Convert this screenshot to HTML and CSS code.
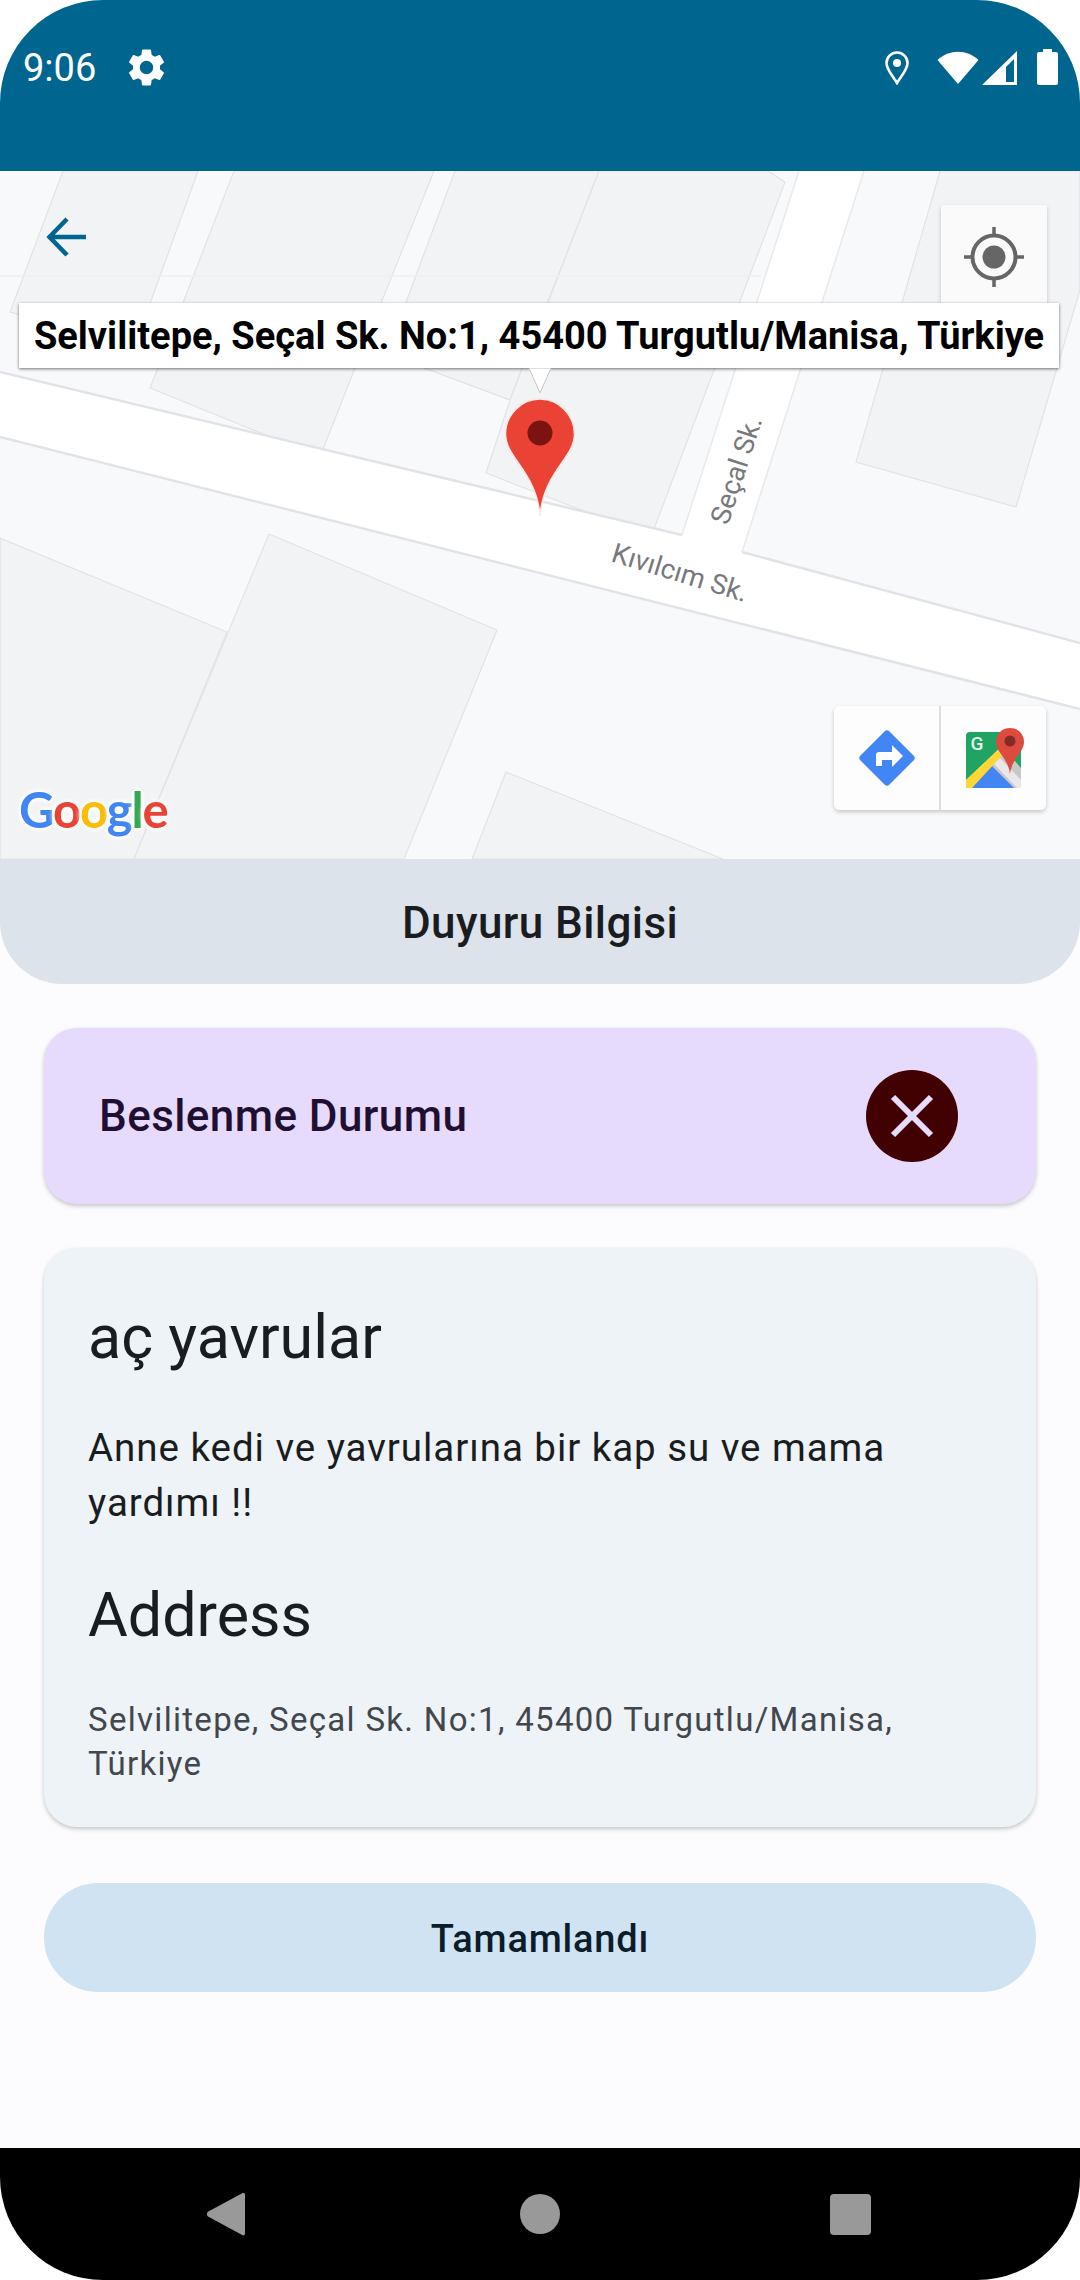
FILE: index.html
```html
<!DOCTYPE html>
<html lang="tr">
<head>
    <meta charset="UTF-8">
    <meta name="viewport" content="width=device-width, initial-scale=1.0">
    <title>Duyuru Bilgisi</title>
    <link rel="stylesheet" href="styles.css">
</head>
<body>

    <div class="phone">

        <!-- status bar -->
        <div class="status-bar">
            <div class="status-left">
                <span class="clock">9:06</span>
                <svg class="gear" width="45" height="45" viewBox="0 0 24 24"><path fill="#fff" d="M19.14 12.94c.04-.3.06-.61.06-.94s-.02-.64-.07-.94l2.03-1.58a.49.49 0 0 0 .12-.61l-1.92-3.32a.49.49 0 0 0-.59-.22l-2.39.96a7 7 0 0 0-1.62-.94l-.36-2.54a.48.48 0 0 0-.48-.41h-3.84a.48.48 0 0 0-.47.41l-.36 2.54c-.59.24-1.13.57-1.62.94l-2.39-.96a.49.49 0 0 0-.59.22L2.74 8.87a.48.48 0 0 0 .12.61l2.03 1.58c-.05.3-.09.63-.09.94s.02.64.07.94l-2.03 1.58a.49.49 0 0 0-.12.61l1.92 3.32c.12.22.37.29.59.22l2.39-.96c.5.38 1.03.7 1.62.94l.36 2.54c.05.24.24.41.48.41h3.84c.24 0 .44-.17.47-.41l.36-2.54c.59-.24 1.13-.56 1.62-.94l2.39.96c.22.08.47 0 .59-.22l1.92-3.32a.48.48 0 0 0-.12-.61l-2.01-1.58zM12 15.6A3.6 3.6 0 1 1 12 8.4a3.6 3.6 0 0 1 0 7.2z"/></svg>
            </div>
            <div class="status-right">
                <svg class="st-pin" width="24" height="34" viewBox="0 0 24 34"><path fill="none" stroke="#fff" stroke-width="2.6" d="M12 32 C8 25 1.5 19 1.5 12 A10.5 10.5 0 0 1 22.5 12 C22.5 19 16 25 12 32Z"/><circle cx="12" cy="12" r="4" fill="#fff"/></svg>
                <svg class="st-wifi" width="42" height="34" viewBox="0 0 42 34"><path fill="#fff" d="M0.5 9 C12 -2 30 -2 41.5 9 L21 33Z"/></svg>
                <svg class="st-signal" width="35" height="34" viewBox="0 0 35 34"><path fill="#fff" fill-rule="evenodd" d="M35 0V34H0ZM32 8 L24 16V31H32Z"/></svg>
                <svg class="st-battery" width="21" height="36" viewBox="0 0 21 36"><path fill="#fff" d="M6 0h9v3h4a2 2 0 0 1 2 2v29a2 2 0 0 1-2 2H2a2 2 0 0 1-2-2V5a2 2 0 0 1 2-2h4z"/></svg>
            </div>
        </div>

        <!-- map -->
        <div class="map">
            <svg class="map-canvas" width="1080" height="688" viewBox="0 171 1080 688">
                <rect x="0" y="171" width="1080" height="688" fill="#f8f9fb"/>
                <g fill="#f1f3f5" stroke="#e2e3e6" stroke-width="1.2">
                    <polygon points="63,171 198,171 135,345 10,312"/>
                    <polygon points="234,171 434,171 355,368 320,457 150,388"/>
                    <polygon points="455,171 599,171 525,360 510,400 424,368 406,302"/>
                    <polygon points="599,171 768,171 785,182 651,537 486,473 510,400"/>
                    <polygon points="940,171 1080,171 1080,290 1057,368 1016,507 856,462"/>
                    <polygon points="0,538 227,632 134,859 0,859"/>
                    <polygon points="269,534 497,630 404,859 134,859"/>
                    <polygon points="506,772 723,859 472,859"/>
                </g>
                <line x1="0" y1="276" x2="761" y2="276" stroke="#f1efea" stroke-width="1.5"/>
                <polygon points="0,372 682,535 799,171 864,171 742,552 1080,643 1080,709 0,437" fill="#fff"/>
                <g fill="none" stroke="#e2e3e7" stroke-width="2.5">
                    <polyline points="0,372 682,535"/>
                    <polyline points="0,437 1080,709"/>
                    <polyline points="742,552 1080,643"/>
                </g>
                <g fill="none" stroke="#e8e9ec" stroke-width="1.5">
                    <polyline points="682,535 799,171"/>
                    <polyline points="742,552 864,171"/>
                </g>
                <text class="street" transform="translate(728 526) rotate(-72)">Seçal Sk.</text>
                <text class="street" transform="translate(610 561) rotate(17)">Kıvılcım Sk.</text>
            </svg>

            <button class="back-btn" aria-label="Geri">
                <svg width="44" height="44" viewBox="0 0 44 44"><path fill="none" stroke="#006690" stroke-width="4.500" d="M41 22H6M22 4 4.500 22 22 40"/></svg>
            </button>

            <div class="locate-btn">
                <svg width="66" height="66" viewBox="0 0 66 66"><circle cx="33" cy="33" r="21.500" fill="none" stroke="#666" stroke-width="4"/><circle cx="33" cy="33" r="11.500" fill="#666"/><path stroke="#666" stroke-width="3.500" d="M33 3v10M33 53v10M3 33h10M53 33h10"/></svg>
            </div>

            <div class="info-window">
                <span class="info-text">Selvilitepe, Seçal Sk. No:1, 45400 Turgutlu/Manisa, Türkiye</span>
            </div>

            <svg class="marker" width="72" height="148" viewBox="0 0 72 148">
                <path fill="#fff" stroke="#c4c4c4" stroke-width="1" d="M25 0 36 25 47 0z"/>
                <path fill="#ea4335" stroke="#fbe9e7" stroke-width="1.500" d="M36 31C17 31 1.500 47 1.500 66c0 24 31 38 34.500 82 3.500-44 34.500-58 34.500-82 0-19-15.500-35-34.500-35z"/>
                <ellipse cx="36" cy="65" rx="12.500" ry="12.500" fill="#7b1411"/>
            </svg>

            <div class="map-tools">
                <div class="tool-cell">
                    <svg width="56" height="56" viewBox="0 0 56 56"><path fill="#4285f4" d="M25.500 1.500a3.500 3.500 0 0 1 5 0l24 24a3.500 3.500 0 0 1 0 5l-24 24a3.500 3.500 0 0 1-5 0l-24-24a3.500 3.500 0 0 1 0-5z"/><path fill="#fff" d="M17 36V25a3 3 0 0 1 3-3h13v-7l11 11-11 11v-7H23v6z"/></svg>
                </div>
                <div class="tool-cell">
                    <div class="maps-icon">
                        <svg width="60" height="60" viewBox="0 0 60 60">
                            <rect x="2" y="4" width="55" height="56" rx="4" fill="#1fa463"/>
                            <polygon points="2,60 2,52 38,18 57,40 57,60" fill="#c8c8c8"/>
                            <polygon points="6,60 28,38 50,60" fill="#4285f4"/>
                            <polygon points="2,52 38,18 42,23 8,60 2,60" fill="#fdd835"/>
                            <polygon points="30,36 36,30 57,52 57,60 53,60" fill="#e8e8e8"/>
                            <path fill="#dd4b3e" d="M46 0C38 0 32 6 32 14c0 10 12 16 14 32 2-16 14-22 14-32 0-8-6-14-14-14z"/>
                            <circle cx="46" cy="13" r="5.500" fill="#802d27"/>
                        </svg>
                        <span class="maps-g">G</span>
                    </div>
                </div>
            </div>

            <div class="google-logo"><span class="g-blue">G</span><span class="g-red">o</span><span class="g-yellow">o</span><span class="g-blue">g</span><span class="g-green">l</span><span class="g-red">e</span></div>
        </div>

        <div class="sheet-header">Duyuru Bilgisi</div>

        <div class="content">
            <div class="status-card">
                <span class="status-title">Beslenme Durumu</span>
                <div class="status-icon">
                    <svg width="44" height="44" viewBox="0 0 44 44"><path stroke="#e8dbfd" stroke-width="6" d="M3 3 41 41M41 3 3 41"/></svg>
                </div>
            </div>

            <div class="detail-card">
                <h2 class="detail-heading">aç yavrular</h2>
                <p class="detail-body">Anne kedi ve yavrularına bir kap su ve mama yardımı !!</p>
                <h2 class="detail-heading address-heading">Address</h2>
                <p class="detail-address">Selvilitepe, Seçal Sk. No:1, 45400 Turgutlu/Manisa, Türkiye</p>
            </div>

            <button class="done-btn">Tamamlandı</button>
        </div>

        <!-- nav bar -->
        <div class="nav-bar">
            <svg width="38" height="46" viewBox="0 0 40 46"><path fill="#999" d="M38 0.500a2 2 0 0 1 2 2v41a2 2 0 0 1-2 2L1 25.500a3.500 3.500 0 0 1 0-5z"/></svg>
            <span class="nav-home"></span>
            <span class="nav-recent"></span>
        </div>

    </div>

</body>
</html>
```

FILE: styles.css
```css
* {
    box-sizing: border-box;
}
body {
    margin: 0;
    background: #fff;
    font-family: Roboto, sans-serif;
}
.phone {
    width: 1080px;
    height: 2280px;
    border-radius: 103px;
    overflow: hidden;
    background: #fcfcff;
    display: flex;
    flex-direction: column;
}

/* status bar */
.status-bar {
    height: 171px;
    flex: none;
    background: #006690;
    display: flex;
    justify-content: space-between;
    align-items: flex-start;
    padding: 49px 22px 0 23px;
    color: #fff;
}
.status-left {
    display: flex;
    align-items: center;
    gap: 28px;
    margin-top: -4px;
}
.clock {
    font-size: 38px;
    line-height: 36px;
}
.status-right {
    display: flex;
    align-items: flex-start;
    margin-top: 2px;
}
.st-wifi {
    margin-left: 28px;
}
.st-signal {
    margin-left: 3px;
}
.st-battery {
    margin-left: 20px;
    margin-top: -2px;
}

/* map */
.map {
    height: 688px;
    flex: none;
    position: relative;
    overflow: hidden;
}
.map-canvas {
    display: block;
}
.street {
    font-family: Roboto, sans-serif;
    font-size: 27.500px;
    fill: #77797c;
}
.back-btn {
    position: absolute;
    left: 45px;
    top: 44px;
    padding: 0;
    border: none;
    background: none;
}
.back-btn svg {
    display: block;
}
.locate-btn {
    position: absolute;
    left: 941px;
    top: 34px;
    width: 106px;
    height: 104px;
    background: rgba(250, 250, 250, 0.95);
    border-radius: 2px;
    box-shadow: 0 2px 4px rgba(0, 0, 0, 0.2);
    display: flex;
    align-items: center;
    justify-content: center;
}
.info-window {
    position: absolute;
    left: 19px;
    top: 132px;
    width: 1040px;
    height: 65px;
    background: #fff;
    box-shadow: 0 1px 3px rgba(0, 0, 0, 0.55);
    display: flex;
    align-items: center;
    justify-content: center;
}
.info-text {
    font-size: 38px;
    font-weight: 700;
    color: #000;
    white-space: nowrap;
}
.marker {
    position: absolute;
    left: 504px;
    top: 197px;
}
.map-tools {
    position: absolute;
    left: 834px;
    top: 535px;
    width: 212px;
    height: 104px;
    background: #fdfdfd;
    border-radius: 5px;
    box-shadow: 0 2px 4px rgba(0, 0, 0, 0.2);
    display: flex;
}
.tool-cell {
    flex: 1;
    display: flex;
    align-items: center;
    justify-content: center;
}
.tool-cell + .tool-cell {
    border-left: 2px solid #dedede;
}
.maps-icon {
    position: relative;
    width: 60px;
    height: 60px;
}
.maps-icon svg {
    display: block;
}
.maps-g {
    position: absolute;
    left: 7px;
    top: 5px;
    font-size: 19px;
    line-height: 22px;
    font-weight: 500;
    color: #e6f3ec;
}
.google-logo {
    position: absolute;
    left: 19px;
    top: 606px;
    font-family: Lato, sans-serif;
    font-size: 49px;
    font-weight: 700;
    line-height: 64px;
    letter-spacing: -1.200px;
    text-shadow: 0 0 3px #fff, 0 0 4px #fff, 0 0 5px #fff, 0 0 6px #fff, 0 0 6px #fff;
}
.g-blue {
    color: #4285f4;
}
.g-red {
    color: #ea4335;
}
.g-yellow {
    color: #fbbc05;
}
.g-green {
    color: #34a853;
}

/* sheet */
.sheet-header {
    height: 125px;
    flex: none;
    background: #dce3ea;
    border-radius: 0 0 62px 62px;
    display: flex;
    align-items: center;
    justify-content: center;
    font-size: 44px;
    font-weight: 500;
    letter-spacing: 0.410px;
    color: #191c20;
    padding-top: 2px;
}
.content {
    flex: 1;
    padding: 44px 44px 0;
    display: flex;
    flex-direction: column;
}
.status-card {
    height: 176px;
    background: #e7dbfd;
    border-radius: 33px;
    box-shadow: 0 2px 4px rgba(0, 0, 0, 0.22);
    display: flex;
    align-items: center;
    justify-content: space-between;
    padding: 0 78px 0 55px;
    color: #1f1033;
}
.status-title {
    font-size: 44px;
    font-weight: 500;
    letter-spacing: 0.410px;
}
.status-icon {
    width: 92px;
    height: 92px;
    border-radius: 50%;
    background: #410002;
    display: flex;
    align-items: center;
    justify-content: center;
}
.detail-card {
    height: 579px;
    margin-top: 44px;
    background: #eef3f7;
    border-radius: 33px;
    box-shadow: 0 2px 4px rgba(0, 0, 0, 0.22);
    padding: 45px 44px 0;
    color: #191c20;
}
.detail-heading {
    margin: 0;
    font-size: 61px;
    line-height: 88px;
    font-weight: 400;
}
.detail-body {
    margin: 39px 0 0;
    font-size: 38.500px;
    line-height: 55px;
    letter-spacing: 0.960px;
}
.address-heading {
    margin-top: 41px;
}
.detail-address {
    margin: 39px 0 0;
    font-size: 33px;
    line-height: 44px;
    letter-spacing: 1.300px;
    color: #42474e;
}
.done-btn {
    height: 109px;
    flex: none;
    margin-top: 56px;
    padding-top: 3px;
    border: none;
    border-radius: 54px;
    background: #d0e3f3;
    font-family: Roboto, sans-serif;
    font-size: 38px;
    font-weight: 500;
    letter-spacing: 0.800px;
    color: #0b1d2a;
}

/* nav bar */
.nav-bar {
    height: 132px;
    flex: none;
    background: #000;
    display: flex;
    align-items: center;
    padding-left: 207px;
}
.nav-home {
    width: 40px;
    height: 40px;
    margin-left: 275px;
    border-radius: 50%;
    background: #999;
}
.nav-recent {
    width: 41px;
    height: 41px;
    margin-left: 270px;
    border-radius: 4px;
    background: #999;
}
```
